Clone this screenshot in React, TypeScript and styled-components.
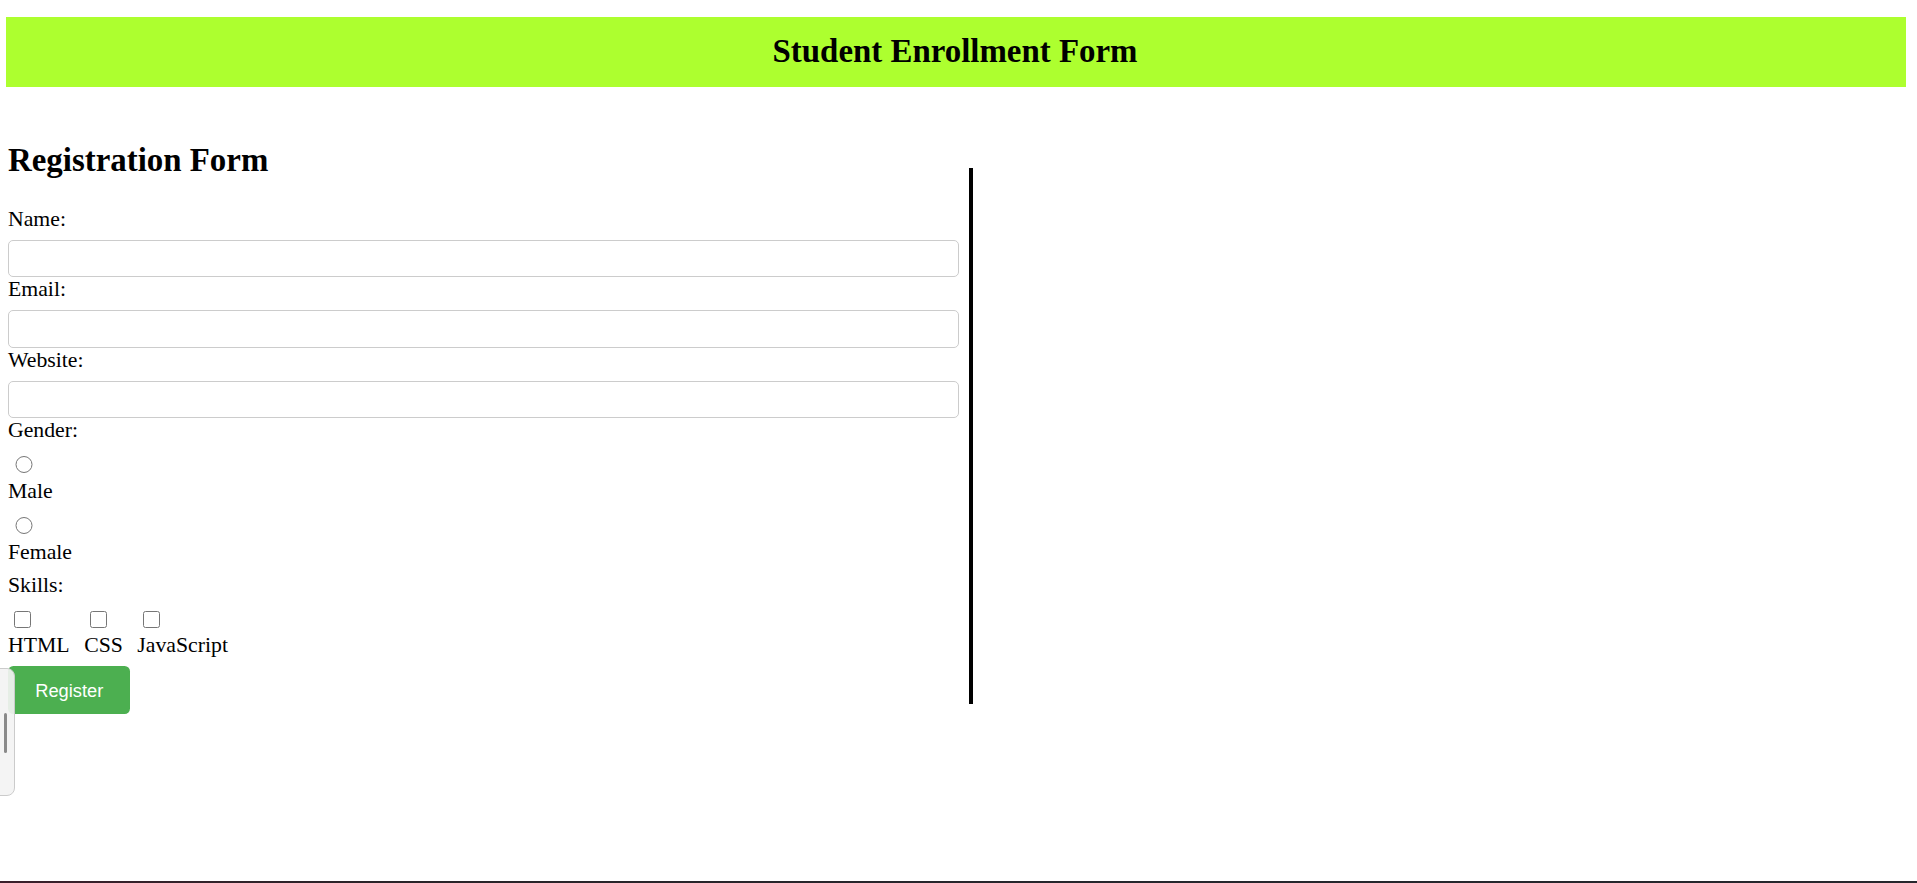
import React from "react";
import styled, { createGlobalStyle } from "styled-components";

const GlobalStyle = createGlobalStyle`
  html, body {
    margin: 0;
    padding: 0;
    background: #ffffff;
  }
  body {
    font-family: "Liberation Serif", "Times New Roman", serif;
    color: #000000;
    overflow: hidden;
  }
`;

const Page = styled.div`
  padding-top: 17px;
  min-height: 866px;
`;

const Header = styled.header`
  margin-left: 6px;
  width: 1900px;
  height: 70px;
  background: #adff2f;
  display: flex;
  align-items: center;
  justify-content: center;
`;

const HeaderTitle = styled.h1`
  margin: 0;
  font-size: 32.9px;
  line-height: 37.5px;
  font-weight: bold;
  padding-right: 2px;
`;

const Main = styled.main`
  display: flex;
  align-items: flex-start;
  margin-top: 54.5px;
  padding-left: 8px;
`;

const FormColumn = styled.section`
  width: 961px;
  display: flex;
  flex-direction: column;
`;

const FormTitle = styled.h2`
  margin: 0 0 27.5px;
  font-size: 32.9px;
  line-height: 37.5px;
  font-weight: bold;
`;

const Form = styled.form`
  display: flex;
  flex-direction: column;
  align-items: flex-start;
`;

const FieldLabel = styled.label<{ $gap?: number }>`
  display: block;
  font-size: 21.76px;
  line-height: 25px;
  margin-bottom: ${(p) => (p.$gap ?? 0)}px;
`;

const TextInput = styled.input`
  box-sizing: border-box;
  width: 951px;
  height: 37.5px;
  margin: 0;
  padding: 0 8px;
  border: 1px solid #cccccc;
  border-radius: 5px;
  font-size: 18px;
  font-family: "Liberation Sans", Arial, sans-serif;
  background: #ffffff;
  outline: none;
`;

const RadioRow = styled.div`
  height: 28px;
  display: flex;
  align-items: flex-start;
`;

const Radio = styled.input`
  width: 17.7px;
  height: 17.7px;
  margin: 4.5px 0 0 7px;
`;

const SkillsRow = styled.div`
  display: flex;
  gap: 14.5px;
  margin-bottom: 8px;
`;

const SkillItem = styled.div`
  display: flex;
  flex-direction: column;
  align-items: flex-start;
`;

const CheckboxBox = styled.div`
  height: 27px;
  display: flex;
  align-items: flex-start;
`;

const Checkbox = styled.input`
  width: 17px;
  height: 17px;
  margin: 4.5px 0 0 5.8px;
`;

const SkillLabel = styled.label`
  display: block;
  font-size: 21.76px;
  line-height: 25px;
`;

const RegisterButton = styled.button`
  height: 48.4px;
  padding: 0 27.2px;
  margin: 0;
  border: none;
  border-radius: 5.4px;
  background: #4caf50;
  color: #ffffff;
  font-family: "Liberation Sans", Arial, sans-serif;
  font-size: 18.3px;
  line-height: 21px;
  cursor: pointer;
`;

const Divider = styled.div`
  width: 4px;
  height: 536px;
  margin-top: 26.5px;
  background: #000000;
  flex-shrink: 0;
`;

const SideWidget = styled.div`
  position: fixed;
  left: -20px;
  top: 668px;
  width: 34.7px;
  height: 128px;
  box-sizing: border-box;
  border: 1px solid #cbcbcb;
  border-radius: 8px;
  background: rgba(243, 243, 243, 0.92);
`;

const SideThumb = styled.div`
  position: absolute;
  left: 23px;
  top: 44px;
  width: 3.4px;
  height: 40px;
  border-radius: 2px;
  background: #8a8a8a;
`;

const BottomEdge = styled.div`
  position: fixed;
  left: 0;
  right: 0;
  bottom: 0;
  height: 2px;
  background: linear-gradient(90deg, #3b1f2b 0%, #2a2429 20%, #25262c 60%, #26272d 100%);
`;

const textFields = [
  { id: "name", label: "Name:", type: "text" },
  { id: "email", label: "Email:", type: "email" },
  { id: "website", label: "Website:", type: "url" },
];

const genders = ["Male", "Female"];
const skills = ["HTML", "CSS", "JavaScript"];

export default function App() {
  return (
    <>
      <GlobalStyle />
      <Page>
        <Header>
          <HeaderTitle>Student Enrollment Form</HeaderTitle>
        </Header>
        <Main>
          <FormColumn>
            <FormTitle>Registration Form</FormTitle>
            <Form onSubmit={(e) => e.preventDefault()}>
              {textFields.map((f) => (
                <React.Fragment key={f.id}>
                  <FieldLabel htmlFor={f.id} $gap={8}>
                    {f.label}
                  </FieldLabel>
                  <TextInput id={f.id} name={f.id} type={f.type} />
                </React.Fragment>
              ))}
              <FieldLabel $gap={8}>Gender:</FieldLabel>
              {genders.map((g) => (
                <React.Fragment key={g}>
                  <RadioRow>
                    <Radio type="radio" name="gender" id={g.toLowerCase()} value={g} />
                  </RadioRow>
                  <FieldLabel htmlFor={g.toLowerCase()} $gap={8}>
                    {g}
                  </FieldLabel>
                </React.Fragment>
              ))}
              <FieldLabel $gap={8}>Skills:</FieldLabel>
              <SkillsRow>
                {skills.map((s) => (
                  <SkillItem key={s}>
                    <CheckboxBox>
                      <Checkbox type="checkbox" id={s.toLowerCase()} value={s} />
                    </CheckboxBox>
                    <SkillLabel htmlFor={s.toLowerCase()}>{s}</SkillLabel>
                  </SkillItem>
                ))}
              </SkillsRow>
              <RegisterButton type="submit">Register</RegisterButton>
            </Form>
          </FormColumn>
          <Divider />
        </Main>
      </Page>
      <SideWidget>
        <SideThumb />
      </SideWidget>
      <BottomEdge />
    </>
  );
}
